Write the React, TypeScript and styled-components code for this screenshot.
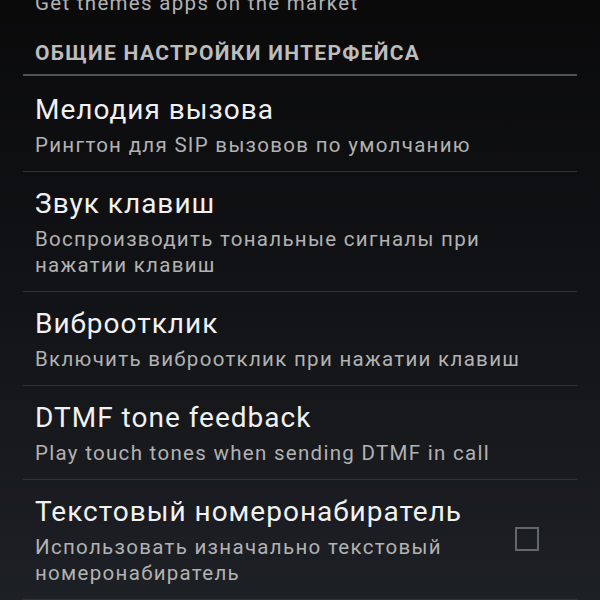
import React from "react";
import styled, { createGlobalStyle } from "styled-components";

const Global = createGlobalStyle`
  html, body { margin: 0; padding: 0; }
  body {
    width: 600px;
    height: 600px;
    overflow: hidden;
    background: #0b0b0c;
    font-family: Roboto, "Noto Sans", sans-serif;
  }
`;

const Screen = styled.div`
  width: 600px;
  height: 600px;
  overflow: hidden;
  background: linear-gradient(180deg, #0a0a0b 0%, #111215 45%, #1d2025 100%);
`;

const List = styled.div`
  display: flex;
  flex-direction: column;
  margin-top: -10px;
`;

const Item = styled.div<{ $divider?: boolean }>`
  display: flex;
  align-items: center;
  margin: 0 23px;
  padding: 15px 12px 13px;
  border-bottom: ${(p) => (p.$divider ? "1px solid #303237" : "none")};
`;

const TopItem = styled.div`
  margin: 0 23px;
  padding: 0 12px;
`;

const Texts = styled.div`
  flex: 1;
  display: flex;
  flex-direction: column;
`;

const Title = styled.div`
  font-size: 28px;
  line-height: 34px;
  letter-spacing: 1px;
  color: #f1f1f1;
  margin-bottom: 5px;
  white-space: nowrap;
`;

const Summary = styled.div`
  font-size: 20.5px;
  line-height: 26px;
  letter-spacing: 1.3px;
  color: #b2b2b2;
  max-width: 512px;
`;

const Category = styled.div`
  margin: 0 23px 2px;
  padding: 25px 12px 9px;
  border-bottom: 2px solid #4f5155;
  font-size: 21px;
  line-height: 24px;
  letter-spacing: 1.3px;
  font-weight: 700;
  color: #bdbdbd;
  text-transform: uppercase;
`;

const Check = styled.div`
  width: 20px;
  height: 20px;
  border: 2px solid #63666c;
  margin: 0 26px 4px 20px;
  flex-shrink: 0;
`;

const items = [
  { t: "Мелодия вызова", s: "Рингтон для SIP вызовов по умолчанию" },
  { t: "Звук клавиш", s: "Воспроизводить тональные сигналы при нажатии клавиш" },
  { t: "Виброотклик", s: "Включить виброотклик при нажатии клавиш" },
  { t: "DTMF tone feedback", s: "Play touch tones when sending DTMF in call" },
  {
    t: "Текстовый номеронабиратель",
    s: "Использовать изначально текстовый номеронабиратель",
    check: true,
  },
];

export default function App() {
  return (
    <Screen>
      <Global />
      <List>
        <TopItem>
          <Summary>Get themes apps on the market</Summary>
        </TopItem>
        <Category>Общие настройки интерфейса</Category>
        {items.map((it) => (
          <Item key={it.t} $divider>
            <Texts>
              <Title>{it.t}</Title>
              <Summary>{it.s}</Summary>
            </Texts>
            {it.check && <Check />}
          </Item>
        ))}
      </List>
    </Screen>
  );
}
